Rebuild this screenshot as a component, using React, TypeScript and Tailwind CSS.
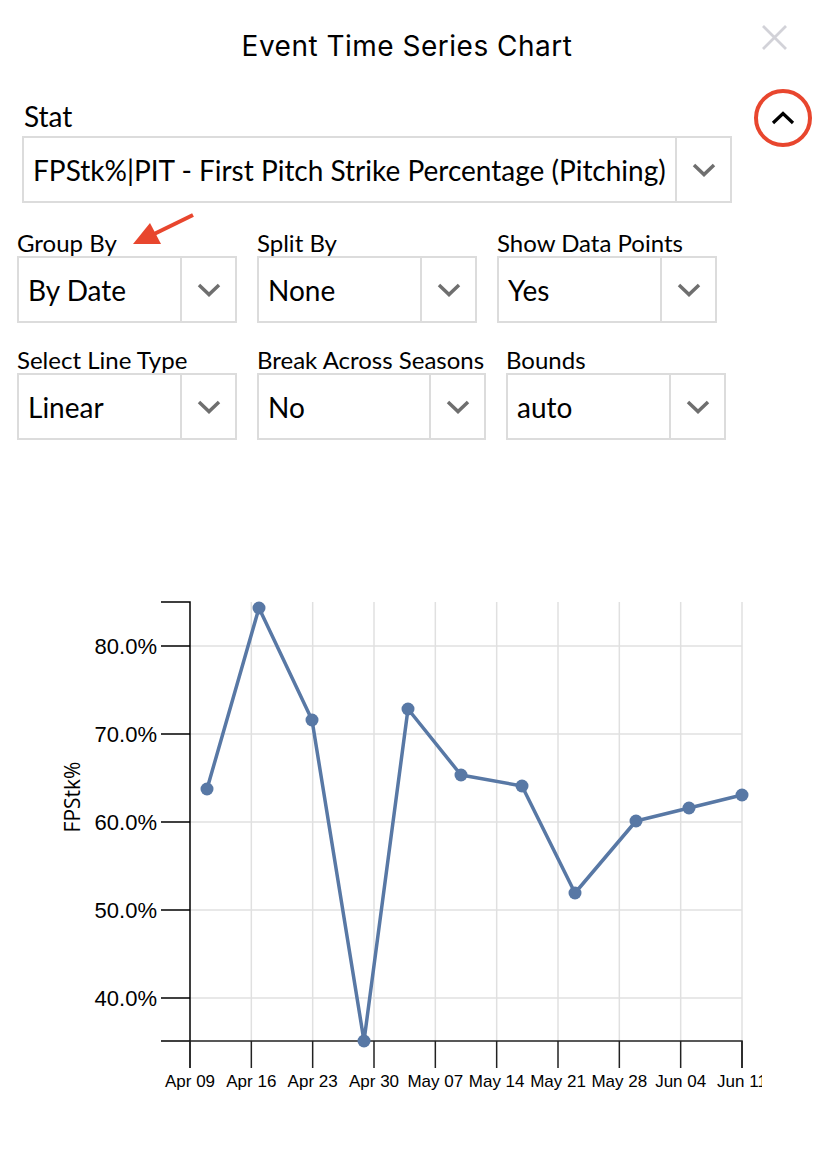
import React from "react";

type Opt = { label: string; value: string; w: string };

const row1: Opt[] = [
  { label: "Group By", value: "By Date", w: "w-[220px]" },
  { label: "Split By", value: "None", w: "w-[220px]" },
  { label: "Show Data Points", value: "Yes", w: "w-[220px]" },
];

const row2: Opt[] = [
  { label: "Select Line Type", value: "Linear", w: "w-[220px]" },
  { label: "Break Across Seasons", value: "No", w: "w-[229px]" },
  { label: "Bounds", value: "auto", w: "w-[220px]" },
];

const xTicks = ["Apr 09", "Apr 16", "Apr 23", "Apr 30", "May 07", "May 14", "May 21", "May 28", "Jun 04", "Jun 11"];
const yTicks = [
  { y: 646, t: "80.0%" },
  { y: 734, t: "70.0%" },
  { y: 822, t: "60.0%" },
  { y: 910, t: "50.0%" },
  { y: 998, t: "40.0%" },
];
const points: [number, number][] = [
  [207, 789],
  [259, 608],
  [312, 720],
  [364, 1041],
  [408, 709],
  [461, 775],
  [522, 786],
  [575, 893],
  [636, 821],
  [689, 808],
  [742, 795],
];

function Chevron() {
  return (
    <svg width="26" height="16" viewBox="0 0 26 16">
      <polyline points="3,3 13,12.5 23,3" fill="none" stroke="#6f6f6f" strokeWidth="3.5" />
    </svg>
  );
}

function Select({ value, className }: { value: string; className: string }) {
  return (
    <div className={`${className} flex border-2 border-[#dcdcdc] bg-white`}>
      <div className="flex-1 flex items-center pl-[9px] text-[28px] whitespace-nowrap overflow-hidden">{value}</div>
      <div className="w-[55px] shrink-0 border-l-2 border-[#dcdcdc] flex items-center justify-center">
        <Chevron />
      </div>
    </div>
  );
}

function Field({ o }: { o: Opt }) {
  return (
    <div className={`${o.w} flex flex-col`}>
      <div className="text-[24px] leading-[24px] whitespace-nowrap">{o.label}</div>
      <Select value={o.value} className="h-[67px] w-full mt-[1px]" />
    </div>
  );
}

function Chart() {
  const xs = xTicks.map((_, i) => 190 + (i * 552) / 9);
  return (
    <svg width="762" height="540" viewBox="0 560 762 540" className="block">
      {yTicks.map((t) => (
        <line key={t.t} x1={190} x2={742} y1={t.y} y2={t.y} stroke="#e0e0e0" strokeWidth="1.5" />
      ))}
      {xs.slice(1).map((x) => (
        <line key={x} x1={x} x2={x} y1={602} y2={1041} stroke="#e0e0e0" strokeWidth="1.5" />
      ))}
      <path d="M161,602H190V1041H161" fill="none" stroke="#000" strokeWidth="1.5" />
      {yTicks.map((t) => (
        <g key={t.t + "k"}>
          <line x1={161} x2={190} y1={t.y} y2={t.y} stroke="#000" strokeWidth="1.5" />
          <text x={157} y={t.y} textAnchor="end" dominantBaseline="central" fontSize="22" fontFamily="'Liberation Sans', Arial, sans-serif" fill="#000">
            {t.t}
          </text>
        </g>
      ))}
      <path d="M190,1068V1041H742V1068" fill="none" stroke="#222" strokeWidth="1.5" />
      {xs.map((x, i) => (
        <g key={xTicks[i]}>
          <line x1={x} x2={x} y1={1041} y2={1068} stroke="#222" strokeWidth="1.5" />
          <text x={x} y={1087} textAnchor="middle" fontSize="17" fontFamily="'Liberation Sans', Arial, sans-serif" fill="#000">
            {xTicks[i]}
          </text>
        </g>
      ))}
      <text
        x={0}
        y={0}
        transform="translate(80 797) rotate(-90)"
        textAnchor="middle"
        fontSize="21"
        fontFamily="'Open Sans', sans-serif"
        fill="#000"
      >
        FPStk%
      </text>
      <polyline points={points.map((p) => p.join(",")).join(" ")} fill="none" stroke="#5878a5" strokeWidth="3.5" strokeLinejoin="round" />
      {points.map(([x, y]) => (
        <circle key={x} cx={x} cy={y} r="6.5" fill="#5878a5" />
      ))}
    </svg>
  );
}

export default function App() {
  return (
    <div className="relative w-[814px] h-[1150px] bg-white text-black font-['Lato',sans-serif]">
      <header className="h-[92px] flex items-center justify-center text-[28px] font-['Inter',sans-serif] tracking-[0.5px]">
        Event Time Series Chart
      </header>
      <button className="absolute left-[761px] top-[24px]" aria-label="close">
        <svg width="27" height="27" viewBox="0 0 27 27">
          <path d="M2,2L25,25M25,2L2,25" stroke="#d2d2d8" strokeWidth="2.8" />
        </svg>
      </button>
      <div className="absolute left-[754px] top-[89px] w-[58px] h-[58px] rounded-full border-4 border-[#e8462e] flex items-center justify-center">
        <svg width="24" height="16" viewBox="0 0 24 16">
          <polyline points="2,13 12,3.5 22,13" fill="none" stroke="#000" strokeWidth="3.2" />
        </svg>
      </div>
      <svg className="absolute left-[120px] top-[200px]" width="90" height="60" viewBox="0 0 90 60">
        <line x1="73" y1="15" x2="30" y2="36" stroke="#e8462e" strokeWidth="4" />
        <polygon points="13,44 30,23 41,44" fill="#e8462e" />
      </svg>

      <section className="pl-[22px] mt-[9px]">
        <div className="text-[28px] leading-[30px] pl-[2px]">Stat</div>
        <Select value="FPStk%|PIT - First Pitch Strike Percentage (Pitching)" className="mt-[5px] w-[710px] h-[67px]" />
      </section>

      <div className="px-[17px] mt-[28px] flex flex-col gap-[25px]">
        <div className="flex gap-[20px]">
          {row1.map((o) => (
            <Field key={o.label} o={o} />
          ))}
        </div>
        <div className="flex gap-[20px]">
          {row2.map((o) => (
            <Field key={o.label} o={o} />
          ))}
        </div>
      </div>

      <div className="mt-[120px]">
        <Chart />
      </div>
    </div>
  );
}
